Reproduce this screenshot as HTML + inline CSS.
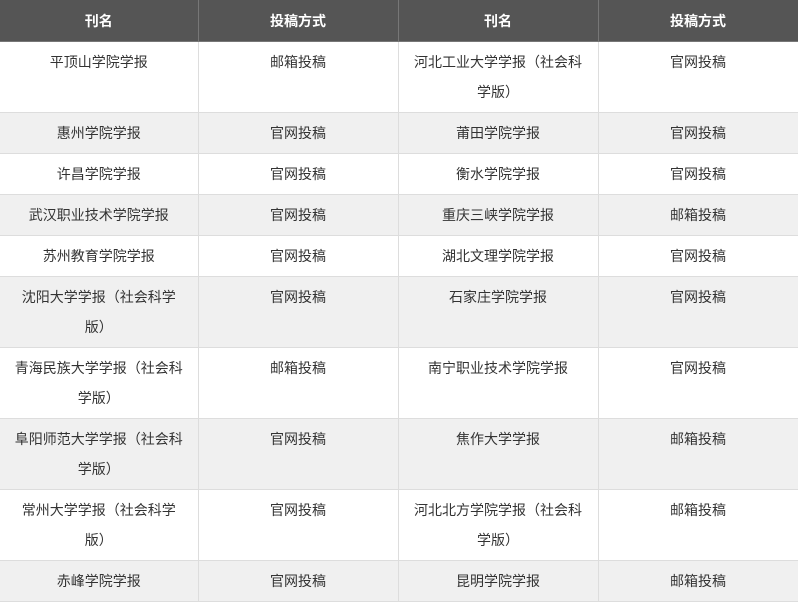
<!DOCTYPE html>
<html><head><meta charset="utf-8"><style>
html,body{margin:0;padding:0;background:#fff;width:798px;height:602px;overflow:hidden}
table{border-collapse:collapse;table-layout:fixed;width:798px;font-family:"Liberation Sans","Noto Sans CJK SC",sans-serif;font-size:14px;color:#333}
td,th{border:1px solid #ddd;padding:5px 15px;line-height:30px;text-align:center;vertical-align:top;word-break:break-all}
td:first-child{padding-left:12px;padding-right:12px}
th{background:#555;color:#fff;font-weight:bold;border-color:#777;border-top:0;padding-top:6px}
tr.a td{background:#f0f0f0}
tr:first-child th:first-child,td:first-child{border-left:0}
</style></head><body>
<table>
<colgroup><col style="width:198px"><col style="width:200px"><col style="width:200px"><col style="width:200px"></colgroup>
<tr><th>刊名</th><th>投稿方式</th><th>刊名</th><th>投稿方式</th></tr>
<tr><td>平顶山学院学报</td><td>邮箱投稿</td><td>河北工业大学学报（社会科学版）</td><td>官网投稿</td></tr>
<tr class="a"><td>惠州学院学报</td><td>官网投稿</td><td>莆田学院学报</td><td>官网投稿</td></tr>
<tr><td>许昌学院学报</td><td>官网投稿</td><td>衡水学院学报</td><td>官网投稿</td></tr>
<tr class="a"><td>武汉职业技术学院学报</td><td>官网投稿</td><td>重庆三峡学院学报</td><td>邮箱投稿</td></tr>
<tr><td>苏州教育学院学报</td><td>官网投稿</td><td>湖北文理学院学报</td><td>官网投稿</td></tr>
<tr class="a"><td>沈阳大学学报（社会科学版）</td><td>官网投稿</td><td>石家庄学院学报</td><td>官网投稿</td></tr>
<tr><td>青海民族大学学报（社会科学版）</td><td>邮箱投稿</td><td>南宁职业技术学院学报</td><td>官网投稿</td></tr>
<tr class="a"><td>阜阳师范大学学报（社会科学版）</td><td>官网投稿</td><td>焦作大学学报</td><td>邮箱投稿</td></tr>
<tr><td>常州大学学报（社会科学版）</td><td>官网投稿</td><td>河北北方学院学报（社会科学版）</td><td>邮箱投稿</td></tr>
<tr class="a"><td>赤峰学院学报</td><td>官网投稿</td><td>昆明学院学报</td><td>邮箱投稿</td></tr>
</table>
</body></html>
